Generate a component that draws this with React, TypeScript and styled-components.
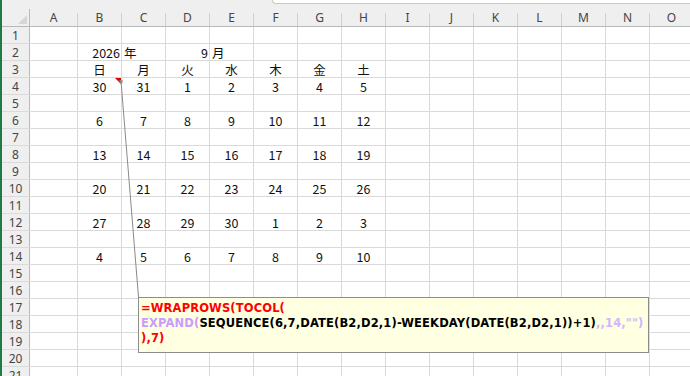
import React from "react";
import styled, { createGlobalStyle } from "styled-components";

const Global = createGlobalStyle`
  html, body { margin: 0; padding: 0; background: #ffffff; overflow: hidden; }
  #root { width: 690px; height: 376px; }
`;

const COLS = ["A", "B", "C", "D", "E", "F", "G", "H", "I", "J", "K", "L", "M", "N", "O"];

type Align = "left" | "center" | "right";
type CellData = { text: string; align: Align };

const Root = styled.div`
  position: relative;
  width: 690px;
  height: 376px;
  overflow: hidden;
  display: flex;
  background: #ffffff;
`;

const GreenEdge = styled.div`
  width: 2px;
  flex: none;
  background: #1e7b45;
`;

const Sheet = styled.div`
  flex: 1;
  display: flex;
  flex-direction: column;
  min-width: 0;
`;

const TopStrip = styled.div`
  height: 9px;
  flex: none;
  background: #efefef;
  display: flex;
`;

const FormulaBox = styled.div`
  margin-left: 270px;
  flex: 1;
  height: 3px;
  background: #ffffff;
  border-left: 1px solid #c8c8c8;
  border-bottom: 1px solid #c8c8c8;
  border-bottom-left-radius: 4px;
`;

const HeaderRow = styled.div`
  height: 17px;
  flex: none;
  display: flex;
  background: #efefef;
  border-bottom: 1px solid #b9b9b9;
`;

const Corner = styled.div`
  position: relative;
  width: 28px;
  flex: none;
  box-sizing: border-box;
  border-right: 1px solid #b9b9b9;
  &::after {
    content: "";
    position: absolute;
    right: 2px;
    bottom: 2px;
    width: 0;
    height: 0;
    border-left: 9px solid transparent;
    border-bottom: 9px solid #d6d6d6;
  }
`;

const ColHeader = styled.div<{ $w: number }>`
  position: relative;
  width: ${(p) => p.$w}px;
  flex: none;
  display: flex;
  align-items: center;
  justify-content: center;
  font-family: "Noto Sans", "Liberation Sans", sans-serif;
  font-size: 12px;
  line-height: 14px;
  color: #454545;
  padding: 1px 1px 0 0;
  box-sizing: border-box;
  &::after {
    content: "";
    position: absolute;
    right: 0;
    top: 4px;
    bottom: 0;
    width: 1px;
    background: #d0d0d0;
  }
`;

const Row = styled.div`
  height: 17px;
  flex: none;
  display: flex;
  box-sizing: border-box;
  border-bottom: 1px solid #dadada;
`;

const RowHeader = styled.div`
  width: 28px;
  flex: none;
  background: #efefef;
  border-right: 1px solid #b9b9b9;
  display: flex;
  align-items: center;
  justify-content: center;
  font-family: "Noto Sans", "Liberation Sans", sans-serif;
  font-size: 12px;
  line-height: 14px;
  color: #454545;
  padding-top: 1px;
  box-sizing: border-box;
`;

const Cell = styled.div<{ $w: number; $align: Align }>`
  width: ${(p) => p.$w}px;
  flex: none;
  box-sizing: border-box;
  border-right: 1px solid #dadada;
  display: flex;
  align-items: center;
  justify-content: ${(p) =>
    p.$align === "left" ? "flex-start" : p.$align === "right" ? "flex-end" : "center"};
  padding: 1px ${(p) => (p.$align === "right" ? 1 : 0)}px 0 ${(p) => (p.$align === "left" ? 2 : 0)}px;
  font-family: "Noto Sans CJK JP", "Noto Sans", sans-serif;
  font-size: 12.5px;
  line-height: 14px;
  color: #111111;
  white-space: nowrap;
`;

const Overlay = styled.svg`
  position: absolute;
  left: 0;
  top: 0;
  pointer-events: none;
`;

const Comment = styled.div`
  position: absolute;
  left: 138px;
  top: 297px;
  width: 507px;
  height: 51px;
  background: #ffffe1;
  border: 1px solid #8c8c8c;
  padding: 3px 0 0 2px;
  font-family: "DejaVu Sans", "Liberation Sans", sans-serif;
  font-weight: bold;
  font-size: 11.5px;
  letter-spacing: 0.14px;
  line-height: 15px;
  white-space: nowrap;
`;

const Line = styled.div``;

const Tok = styled.span<{ $c: "red" | "purple" | "black" | "lilac" }>`
  color: ${(p) =>
    p.$c === "red" ? "#ff0000" : p.$c === "purple" ? "#c89cff" : p.$c === "lilac" ? "#d2b4ff" : "#000000"};
`;

const colWidth = (i: number) => (i === 0 ? 48 : 44);

function buildRows(): CellData[][] {
  const rows: CellData[][] = [];
  for (let r = 1; r <= 21; r++) {
    rows.push(COLS.map(() => ({ text: "", align: "center" as Align })));
  }
  rows[1][1] = { text: "2026", align: "right" };
  rows[1][2] = { text: "年", align: "left" };
  rows[1][3] = { text: "9", align: "right" };
  rows[1][4] = { text: "月", align: "left" };
  ["日", "月", "火", "水", "木", "金", "土"].forEach((d, i) => {
    rows[2][i + 1] = { text: d, align: "center" };
  });
  const weeks = [
    [30, 31, 1, 2, 3, 4, 5],
    [6, 7, 8, 9, 10, 11, 12],
    [13, 14, 15, 16, 17, 18, 19],
    [20, 21, 22, 23, 24, 25, 26],
    [27, 28, 29, 30, 1, 2, 3],
    [4, 5, 6, 7, 8, 9, 10],
  ];
  weeks.forEach((w, wi) => {
    w.forEach((n, i) => {
      rows[3 + wi * 2][i + 1] = { text: String(n), align: "center" };
    });
  });
  return rows;
}

const rows = buildRows();

export default function App() {
  return (
    <>
      <Global />
      <Root>
        <GreenEdge />
        <Sheet>
          <TopStrip>
            <FormulaBox />
          </TopStrip>
          <HeaderRow>
            <Corner />
            {COLS.map((c, i) => (
              <ColHeader key={c} $w={colWidth(i)}>
                {c}
              </ColHeader>
            ))}
          </HeaderRow>
          {rows.map((cells, r) => (
            <Row key={r}>
              <RowHeader>{r + 1}</RowHeader>
              {cells.map((cell, i) => (
                <Cell key={i} $w={colWidth(i)} $align={cell.align}>
                  {cell.text}
                </Cell>
              ))}
            </Row>
          ))}
        </Sheet>
        <Overlay width={690} height={376} viewBox="0 0 690 376">
          <line x1={121} y1={81} x2={138.5} y2={297} stroke="#8a8a8a" strokeWidth={1} />
          <polygon points="115,78 121,78 121,84" fill="#e00000" />
          <rect x={119.5} y={80} width={3} height={3} fill="#8a8a8a" />
        </Overlay>
        <Comment>
          <Line>
            <Tok $c="red">=WRAPROWS(TOCOL(</Tok>
          </Line>
          <Line>
            <Tok $c="purple">EXPAND(</Tok>
            <Tok $c="black">SEQUENCE(6,7,DATE(B2,D2,1)-WEEKDAY(DATE(B2,D2,1))+1)</Tok>
            <Tok $c="lilac">,,14,"")</Tok>
          </Line>
          <Line>
            <Tok $c="red">),7)</Tok>
          </Line>
        </Comment>
      </Root>
    </>
  );
}
